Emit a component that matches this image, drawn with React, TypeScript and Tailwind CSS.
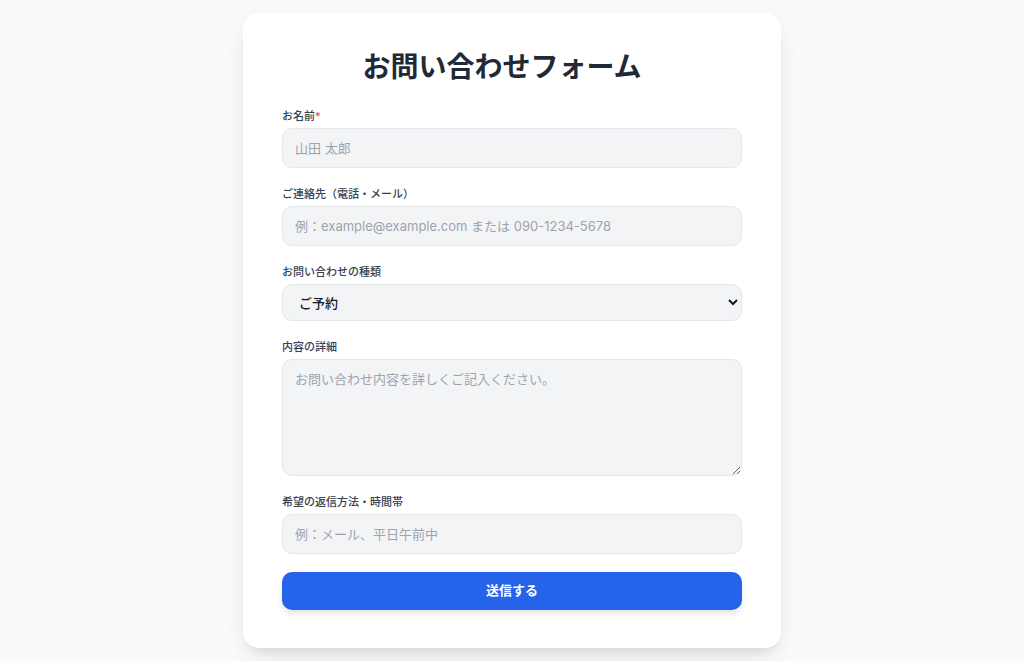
import { useState } from 'react';

const font = "font-['Inter','Noto_Sans_CJK_JP',sans-serif]";

const inputClass =
  'block w-full h-[40px] rounded-[10px] border border-[#e5e7eb] bg-[#f3f4f6] px-3 text-[13px] text-[#111827] placeholder:text-[#9ca3af] outline-none';

function Field({ label, required, children }: { label: string; required?: boolean; children: React.ReactNode }) {
  return (
    <div>
      <label className="block text-[11px] font-medium leading-5 text-[#374151] mb-0.5">
        {label}
        {required && <span className="text-[#ef4444]">*</span>}
      </label>
      {children}
    </div>
  );
}

export default function App() {
  const [kind, setKind] = useState('ご予約');

  return (
    <div className={`min-h-screen bg-[#f9fafb] pt-[13px] pb-4 ${font}`}>
      <div className="mx-auto w-[538px] rounded-2xl bg-white px-[39px] pt-[36px] pb-[38px] shadow-[0_10px_25px_-5px_rgba(0,0,0,0.12),0_8px_10px_-6px_rgba(0,0,0,0.08)]">
        <h1 className="text-center text-[28px] font-bold leading-9 text-[#1f2937] mb-[21px] pr-5">お問い合わせフォーム</h1>

        <form className="space-y-4" onSubmit={e => e.preventDefault()}>
          <Field label="お名前" required>
            <input className={inputClass} placeholder="山田 太郎" />
          </Field>

          <Field label="ご連絡先（電話・メール）">
            <input className={inputClass} placeholder="例：example@example.com または 090-1234-5678" />
          </Field>

          <Field label="お問い合わせの種類">
            <select
              value={kind}
              onChange={e => setKind(e.target.value)}
              className="block w-full h-[37px] rounded-[10px] border border-[#e5e7eb] bg-[#f3f4f6] px-3 text-[13px] font-medium text-[#111827] outline-none"
            >
              <option>ご予約</option>
              <option>ご質問</option>
              <option>その他</option>
            </select>
          </Field>

          <Field label="内容の詳細">
            <textarea
              className="block w-full h-[117px] rounded-[10px] border border-[#e5e7eb] bg-[#f3f4f6] px-3 py-2.5 text-[13px] text-[#111827] placeholder:text-[#9ca3af] outline-none resize-y"
              placeholder="お問い合わせ内容を詳しくご記入ください。"
            />
          </Field>

          <Field label="希望の返信方法・時間帯">
            <input className={inputClass} placeholder="例：メール、平日午前中" />
          </Field>

          <div className="pt-[2px]">
            <button
              type="submit"
              className="w-full h-[38px] rounded-[10px] bg-[#2563eb] text-[13px] font-bold text-white shadow-[0_4px_8px_-2px_rgba(0,0,0,0.15)]"
            >
              送信する
            </button>
          </div>
        </form>
      </div>
    </div>
  );
}
